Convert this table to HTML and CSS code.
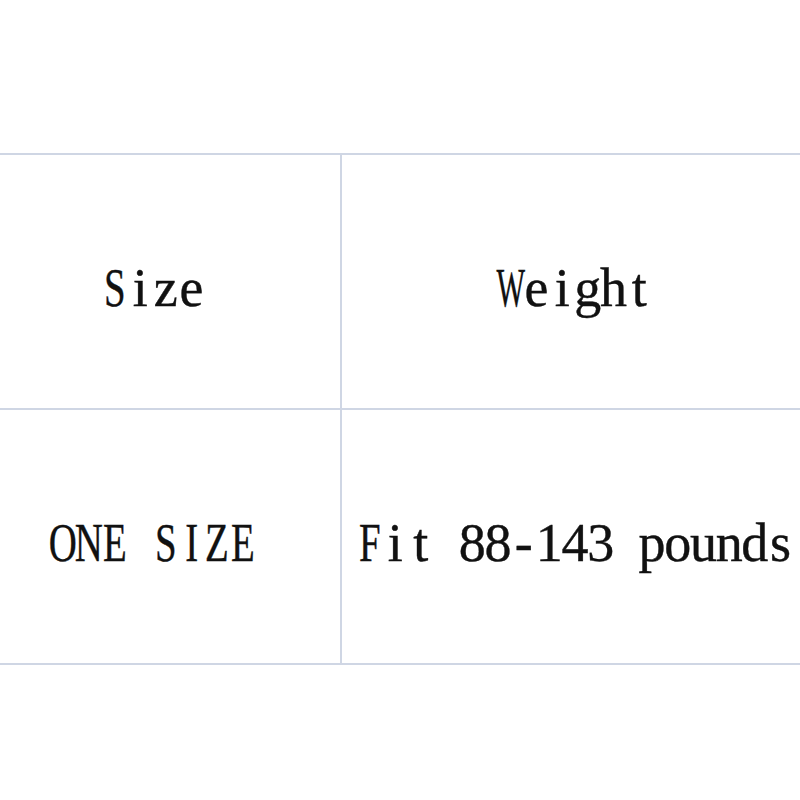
FILE: index.html
```html
<!DOCTYPE html>
<html>
<head>
<meta charset="utf-8">
<link rel="stylesheet" href="styles.css">
</head>
<body>
<div class="page">
  <table class="size-table">
    <colgroup>
      <col class="col-size">
      <col class="col-weight">
    </colgroup>
    <tr>
      <td><span class="txt"><span class="ch cap">S</span><span class="ch">i</span><span class="ch">z</span><span class="ch">e</span></span></td>
      <td><span class="txt"><span class="ch w">W</span><span class="ch">e</span><span class="ch">i</span><span class="ch">g</span><span class="ch">h</span><span class="ch">t</span></span></td>
    </tr>
    <tr>
      <td><span class="txt"><span class="ch cap">O</span><span class="ch cap">N</span><span class="ch cap">E</span><span class="ch"> </span><span class="ch cap">S</span><span class="ch cap">I</span><span class="ch cap">Z</span><span class="ch cap">E</span></span></td>
      <td><span class="txt"><span class="ch cap">F</span><span class="ch">i</span><span class="ch">t</span><span class="ch"> </span><span class="ch">8</span><span class="ch">8</span><span class="ch">-</span><span class="ch">1</span><span class="ch">4</span><span class="ch">3</span><span class="ch"> </span><span class="ch">p</span><span class="ch">o</span><span class="ch">u</span><span class="ch">n</span><span class="ch">d</span><span class="ch">s</span></span></td>
    </tr>
  </table>
</div>
</body>
</html>
```

FILE: styles.css
```css
html, body {
  margin: 0;
  padding: 0;
  background: #ffffff;
  width: 800px;
  height: 800px;
  overflow: hidden;
}
.page {
  padding-top: 153px;
}
.size-table {
  border-collapse: collapse;
  margin-left: -36px;
  table-layout: fixed;
  width: 844px;
}
.col-size {
  width: 376px;
}
.col-weight {
  width: 468px;
}
.size-table td {
  border: 2px solid #cfd6e4;
  height: 253px;
  padding: 0;
  text-align: center;
  vertical-align: middle;
  font-family: "Liberation Serif", "Times New Roman", serif;
  font-size: 54px;
  line-height: 1;
  color: #111111;
  white-space: nowrap;
}
.txt {
  display: inline-flex;
  position: relative;
  top: 6px;
}
.ch {
  display: inline-flex;
  justify-content: center;
  width: 25.7px;
  white-space: pre;
  -webkit-text-stroke: 0.4px #111111;
}
.cap {
  transform: scaleX(0.72);
}
.w {
  transform: scaleX(0.56);
}
```
